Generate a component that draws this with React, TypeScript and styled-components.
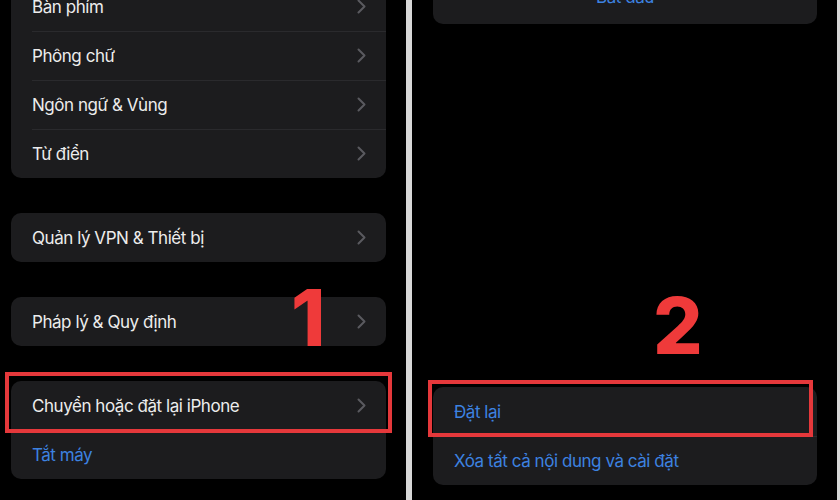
import React from "react"
import styled, { createGlobalStyle } from "styled-components"

const GlobalStyle = createGlobalStyle`
  html, body {
    margin: 0;
    padding: 0;
    background: #000;
  }
  body {
    font-family: Inter, "Noto Sans", sans-serif;
    -webkit-font-smoothing: antialiased;
  }
`

interface RowData {
  label: string
  blue?: boolean
  chevron?: boolean
  highlight?: boolean
}

const leftGroups: RowData[][] = [
  [
    { label: "Bàn phím", chevron: true },
    { label: "Phông chữ", chevron: true },
    { label: "Ngôn ngữ & Vùng", chevron: true },
    { label: "Từ điển", chevron: true }
  ],
  [{ label: "Quản lý VPN & Thiết bị", chevron: true }],
  [{ label: "Pháp lý & Quy định", chevron: true }],
  [
    { label: "Chuyển hoặc đặt lại iPhone", chevron: true, highlight: true },
    { label: "Tắt máy", blue: true }
  ]
]

const Chevron = () => (
  <ChevronSvg viewBox="0 0 9 15" width="9" height="15">
    <path
      d="M1.5 1.5 L7.5 7.5 L1.5 13.5"
      fill="none"
      stroke="#5a5a5f"
      strokeWidth="2"
      strokeLinecap="round"
      strokeLinejoin="round"
    />
  </ChevronSvg>
)

const Row: React.FC<{ row: RowData; first: boolean; side: "left" | "right" }> = ({
  row,
  first,
  side
}) => (
  <RowWrap $first={first}>
    <Label $blue={row.blue}>{row.label}</Label>
    {row.chevron && <Chevron />}
    {row.highlight && <Highlight $side={side} />}
  </RowWrap>
)

const App: React.FC = () => (
  <>
    <GlobalStyle />
    <Page>
      <LeftPanel>
        {leftGroups.map((group, gi) => (
          <Card key={gi}>
            {group.map((row, ri) => (
              <Row key={row.label} row={row} first={ri === 0} side="left" />
            ))}
          </Card>
        ))}
        <StepNumber $side="left">1</StepNumber>
      </LeftPanel>
      <Divider />
      <RightPanel>
        <TopCard>
          <CenterLabel>Bắt đầu</CenterLabel>
        </TopCard>
        <BottomCard>
          <Row row={{ label: "Đặt lại", blue: true, highlight: true }} first side="right" />
          <Row row={{ label: "Xóa tất cả nội dung và cài đặt", blue: true }} first={false} side="right" />
        </BottomCard>
        <StepNumber $side="right">2</StepNumber>
      </RightPanel>
      <EdgeStrip />
    </Page>
  </>
)

const Page = styled.div`
  display: flex;
  width: 840px;
  height: 500px;
  overflow: hidden;
  background: #000;
`

const LeftPanel = styled.div`
  position: relative;
  width: 406px;
  flex-shrink: 0;
  display: flex;
  flex-direction: column;
  gap: 35px;
  padding: 0 20px 0 11px;
  margin-top: -18px;
  box-sizing: border-box;
`

const Divider = styled.div`
  width: 6px;
  flex-shrink: 0;
  background: #d8d8d8;
`

const RightPanel = styled.div`
  position: relative;
  width: 425px;
  flex-shrink: 0;
  display: flex;
  flex-direction: column;
  padding: 0 20px 15px 21px;
  box-sizing: border-box;
`

const EdgeStrip = styled.div`
  flex: 1;
  background: #d8d8d8;
`

const Card = styled.div`
  background: #1c1c1e;
  border-radius: 10px;
  display: flex;
  flex-direction: column;
`

const TopCard = styled(Card)`
  margin-top: -25px;
  height: 49px;
  align-items: center;
  justify-content: center;
`

const BottomCard = styled(Card)`
  margin-top: auto;
`

const RowWrap = styled.div<{ $first: boolean }>`
  position: relative;
  height: 49px;
  display: flex;
  align-items: center;
  justify-content: space-between;
  padding: 0 20px 0 21px;
  box-sizing: border-box;

  &::before {
    content: "";
    display: ${(p) => (p.$first ? "none" : "block")};
    position: absolute;
    top: 0;
    left: 21px;
    right: 0;
    height: 1px;
    background: #2a2a2d;
  }
`

const Label = styled.span<{ $blue?: boolean }>`
  font-size: 17px;
  letter-spacing: -0.45px;
  color: ${(p) => (p.$blue ? "#3d82e0" : "#ececec")};
  white-space: nowrap;
`

const CenterLabel = styled(Label)`
  color: #3d82e0;
  margin-top: -6px;
`

const ChevronSvg = styled.svg`
  display: block;
  flex-shrink: 0;
`

const Highlight = styled.div<{ $side: "left" | "right" }>`
  position: absolute;
  z-index: 2;
  pointer-events: none;
  border: 4px solid #e5383b;
  top: ${(p) => (p.$side === "left" ? "-9px" : "-7px")};
  bottom: ${(p) => (p.$side === "left" ? "-3px" : "-1px")};
  left: ${(p) => (p.$side === "left" ? "-6px" : "-5px")};
  right: ${(p) => (p.$side === "left" ? "-6px" : "4px")};
`

const StepNumber = styled.div<{ $side: "left" | "right" }>`
  position: absolute;
  font-family: Inter, "Open Sans", sans-serif;
  font-weight: 800;
  font-size: 78px;
  line-height: 1;
  color: #ef3a3a;
  left: ${(p) => (p.$side === "left" ? "291px" : "241px")};
  top: ${(p) => (p.$side === "left" ? "297px" : "287px")};
`

export default App
